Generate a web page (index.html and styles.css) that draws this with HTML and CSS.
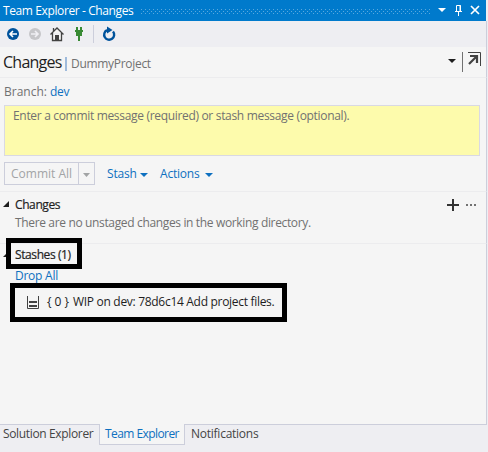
FILE: index.html
```html
<!DOCTYPE html>
<html lang="en">
<head>
<meta charset="utf-8">
<title>Team Explorer - Changes</title>
<link rel="stylesheet" href="styles.css">
</head>
<body>
<main class="window">
  <header class="titlebar">
    <span class="title">Team Explorer - Changes</span>
    <svg class="grip" width="290" height="5"><defs><pattern id="dots" width="4" height="4" patternUnits="userSpaceOnUse"><path fill="#59a8de" d="M0 0h1v1H0zM2 2h1v1H2z"/></pattern></defs><rect width="290" height="5" fill="url(#dots)"/></svg>
    <svg class="controls" width="50" height="21"><path d="M4 8h8l-4 4z" fill="#fff"/><path d="M22.500 11V5.500h4V11M26 5v6M21 11.500h7M24.500 12v4" stroke="#fff" fill="none"/><path d="M37 6l8 8M45 6l-8 8" stroke="#fff" stroke-width="1.700"/></svg>
  </header>
  <nav class="toolbar">
    <svg width="120" height="26">
      <circle cx="13" cy="13" r="6" fill="#00539c"/><path d="M17 13H10M13 10l-3 3 3 3" fill="none" stroke="#fff" stroke-width="1.600"/>
      <circle cx="35" cy="13" r="6" fill="#c6c6c9"/><path d="M31 13h7M35 10l3 3-3 3" fill="none" stroke="#f0eff3" stroke-width="1.600"/>
      <path d="M50.500 13.500L57 7l6.500 6.500M52.500 12v7.500h9V12M53.500 10V7" fill="#f4f4f4" stroke="#424242" stroke-width="1.300"/><path d="M55 14h4v6h-4z" fill="#424242"/>
      <path d="M76 6h2v3h2V6h2v3h1v2h-1v4h-2v5h-2v-5h-2v-4h-1V9h1z" fill="#388a34"/>
      <path d="M93.500 4v18" stroke="#cccedb"/>
      <path d="M107 9.200a5 5 0 1 0 6 1.300" fill="none" stroke="#00539c" stroke-width="2.400"/><path d="M107 5.500v7l5.500-3.500z" fill="#00539c"/>
    </svg>
  </nav>
  <section class="pagehead">
    <span class="page">Changes</span><i class="bar"></i><span class="project">DummyProject</span>
    <svg class="popout" width="34" height="30"><path d="M0 12h8l-4 4z" fill="#1e1e1e"/><path d="M14.500 5v20" stroke="#717171"/><path d="M20 5.500h12.500V19" fill="none" stroke="#424242"/><path d="M21 17l8-8M22 9h7v7" fill="none" stroke="#424242" stroke-width="2.200"/></svg>
  </section>
  <div class="branch"><span class="label">Branch:</span><a class="dev">dev</a></div>
  <div class="message"><span>Enter a commit message (required) or stash message (optional).</span></div>
  <div class="actions">
    <div class="commit"><span>Commit All</span><i><svg width="7" height="4"><path d="M0 0h7L3.500 4z" fill="#a2a4a5"/></svg></i></div>
    <a class="stash">Stash</a><svg class="arrow" width="8" height="4"><path d="M0 0h8L4 4z" fill="#0e70c0"/></svg>
    <a class="more">Actions</a><svg class="arrow" width="8" height="4"><path d="M0 0h8L4 4z" fill="#0e70c0"/></svg>
  </div>
  <section class="changes">
    <div class="sectionhead"><svg width="12" height="8"><path d="M9 0v6H3z" fill="#1e1e1e"/></svg><b>Changes</b>
      <svg class="tools" width="34" height="14"><path d="M7 1v12M1 7h12" stroke="#333" stroke-width="2"/><path d="M20 6h2v2h-2zM24 6h2v2h-2zM28 6h2v2h-2z" fill="#717171"/></svg></div>
    <p><span class="empty">There are no unstaged changes in the working directory.</span></p>
  </section>
  <section class="stashes">
    <div class="sectionhead"><svg width="12" height="8"><path d="M9 0v6H3z" fill="#1e1e1e"/></svg><b>Stashes (1)</b></div>
    <p><a class="drop">Drop All</a></p>
    <div class="entry"><svg width="12" height="13"><path d="M.5 0v12.500h11V0" fill="none" stroke="#424242"/><path d="M2 6h8M2 10h8" stroke="#424242" stroke-width="2"/></svg><span class="index">{ 0 }</span><span class="wip">WIP on dev: 78d6c14 Add project files.</span></div>
    <div class="mark mark-head"></div>
    <div class="mark mark-entry"></div>
  </section>
  <footer class="tabs">
    <span class="tab solution">Solution Explorer</span><span class="tab active">Team Explorer</span><span class="tab notes">Notifications</span>
  </footer>
</main>
</body>
</html>
```
FILE: styles.css
```css
* { box-sizing: border-box; }
body { margin: 0; background: #eeeef2; font: 12px/16px "Open Sans", "Noto Sans", sans-serif; color: #1e1e1e; }
svg { display: block; flex: none; }
p { margin: 0; }
span, a, b { white-space: nowrap; }
a { color: #0e70c0; }
.window { width: 488px; height: 452px; display: flex; flex-direction: column; overflow: hidden; }
.titlebar { width: 486px; height: 21px; background: #007acc; color: #fff; display: flex; align-items: center; padding-left: 3px; }
.title { width: 138px; letter-spacing: -.39px; }
.grip { margin-top: 1px; }
.controls { margin-left: 3px; }
.toolbar { height: 26px; border-right: 1px solid #cccedb; width: 487px; }
.pagehead, .branch, .message, .actions, .changes, .stashes { position: relative; }
.pagehead, .branch, .actions, .changes, .stashes { width: 487px; background: #f5f5f5; border-right: 1px solid #cccedb; }
.pagehead { height: 31px; border-bottom: 1px solid #ececee; display: flex; align-items: center; padding-left: 3px; }
.page { font-size: 16px; width: 62px; letter-spacing: -.75px; }
.bar { width: 2px; height: 14px; background: #9fbbdc; margin-top: 3px; }
.project { margin: 3px 0 0 4px; color: #717171; letter-spacing: -.3px; }
.popout { margin-left: auto; margin-right: 4px; }
.branch { height: 27px; padding: 6px 0 0 4px; color: #717171; display: flex; }
.label { width: 46px; letter-spacing: 0; }
.dev { letter-spacing: -.3px; }
.message { height: 52px; width: 487px; padding-left: 4px; padding-right: 6px; background: #f5f5f5; border-right: 1px solid #cccedb; color: #717171; }
.message span { display: block; height: 51px; padding: 2px 0 0 8px; background: #fdfbac; border: 1px solid #d9d9e3; letter-spacing: -.32px; }
.actions { height: 34px; padding: 5px 0 0 4px; display: flex; align-items: flex-start; }
.commit { width: 91px; height: 23px; border: 1px solid #cccedb; display: flex; color: #a2a4a5; }
.commit span { width: 74px; padding: 3px 0 0 6px; border-right: 1px solid #cccedb; }
.commit i { padding: 10px 0 0 4px; }
.stash, .more { margin-top: 4px; letter-spacing: -.2px; }
.stash { margin-left: 12px; width: 33px; }
.more { margin-left: 12px; width: 45px; }
.arrow { margin-top: 11px; }
.changes { height: 52px; border-top: 1px solid #ececee; padding-top: 4px; }
.sectionhead { height: 17px; display: flex; align-items: center; }
.sectionhead b { font-weight: 500; margin-left: 3px; letter-spacing: -.4px; -webkit-text-stroke: .2px #1e1e1e; }
.tools { margin-left: auto; margin-right: 6px; }
.changes p { padding: 2px 0 0 15px; color: #717171; }
.empty { letter-spacing: -.35px; }
.stashes { height: 181px; border-top: 1px solid #ececee; padding-top: 2px; }
.stashes p { padding: 5px 0 0 15px; }
.drop { letter-spacing: -.25px; }
.entry { display: flex; align-items: center; margin: 10px 0 0 27px; height: 16px; }
.index { margin-left: 8px; width: 26px; }
.wip { letter-spacing: -.3px; }
.mark { position: absolute; border: 5px solid #000; }
.mark-head { left: 6px; top: -6px; width: 76px; height: 31px; }
.mark-entry { left: 10px; top: 39px; width: 277px; height: 39px; }
.tabs { height: 28px; display: flex; align-items: flex-start; color: #444; width: 487px; }
.tab { height: 21px; padding-top: 1px; border-top: 1px solid #cccedb; letter-spacing: -.35px; }
.solution { width: 99px; padding-left: 3px; }
.active { width: 86px; padding: 2px 0 0 5px; background: #f5f5f5; border: 1px solid #cccedb; border-top: 0; color: #0e70c0; letter-spacing: -.57px; }
.notes { flex: 1; padding-left: 6px; letter-spacing: -.25px; }
```
